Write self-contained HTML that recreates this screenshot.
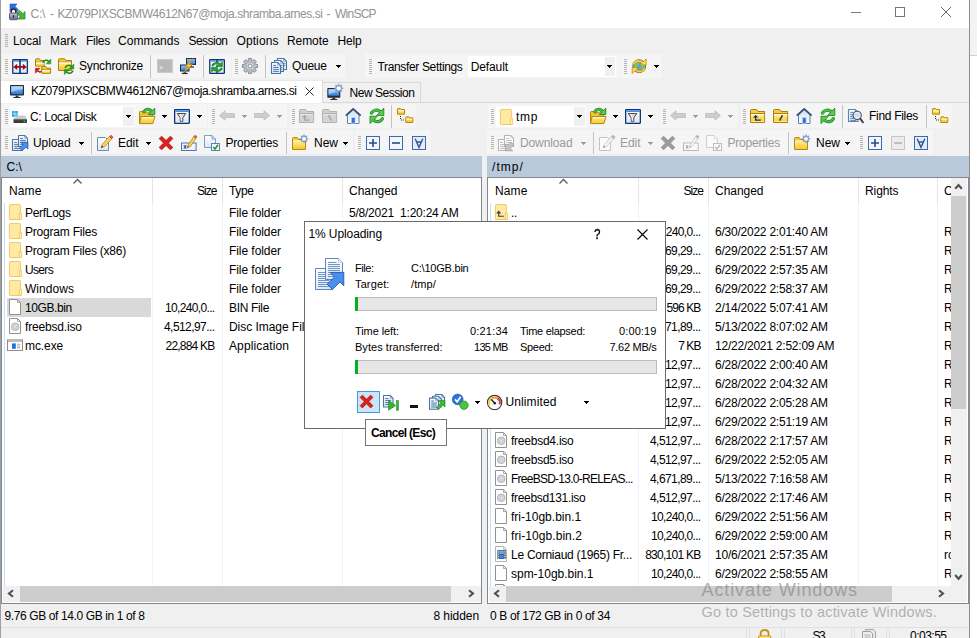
<!DOCTYPE html>
<html><head><meta charset="utf-8"><title>WinSCP</title>
<style>
*{box-sizing:border-box;margin:0;padding:0}
html,body{width:977px;height:638px;overflow:hidden}
body{background:#f0f0f0;font-family:"Liberation Sans",sans-serif;font-size:12px;color:#000;position:relative}
.a{position:absolute}
.t{position:absolute;white-space:pre;line-height:16px;height:16px}
.dis{color:#999}
.tb{position:absolute;background:#f7f7f7}
.grip{position:absolute;width:3px;background:repeating-linear-gradient(to bottom,#b4b4b4 0,#b4b4b4 1px,transparent 1px,transparent 2px)}
.sep{position:absolute;width:1px;background:#c3c3c3}
.dd{position:absolute;width:0;height:0;border-left:3px solid transparent;border-right:3px solid transparent;border-top:3px solid #000}
.dd.g{border-top-color:#9a9a9a}
.ch{position:absolute;width:1px;background:#e2e2e2}
.cl{position:absolute;width:1px;background:#eaf2fb}
svg{position:absolute;overflow:visible}
.dlg{font-size:11px}
</style></head>
<body>
<svg width="0" height="0" style="position:absolute"><defs>
<linearGradient id="gf" x1="0" y1="0" x2="0" y2="1"><stop offset="0" stop-color="#ffee8c"/><stop offset="1" stop-color="#f6c730"/></linearGradient>
<linearGradient id="gb" x1="0" y1="0" x2="0" y2="1"><stop offset="0" stop-color="#9ccbf7"/><stop offset="1" stop-color="#2d74d6"/></linearGradient>
<linearGradient id="gp" x1="0" y1="0" x2="0" y2="1"><stop offset="0" stop-color="#c9dff7"/><stop offset="1" stop-color="#ffffff"/></linearGradient>
<linearGradient id="gg" x1="0" y1="0" x2="0" y2="1"><stop offset="0" stop-color="#7ad06a"/><stop offset="1" stop-color="#1f9a25"/></linearGradient>
<linearGradient id="gl" x1="0" y1="0" x2="0" y2="1"><stop offset="0" stop-color="#c4ccd9"/><stop offset="1" stop-color="#5d6a80"/></linearGradient>
<linearGradient id="gd" x1="0" y1="0" x2="0" y2="1"><stop offset="0" stop-color="#ffffff"/><stop offset="1" stop-color="#dbe7f5"/></linearGradient>
</defs></svg>
<div class="a" style="left:0px;top:0px;width:970px;height:28px;background:#fff;"></div>
<div class="a" style="left:970px;top:0px;width:7px;height:56px;background:#f3f3f3;"></div>
<div class="a" style="left:970px;top:56px;width:7px;height:582px;background:#fff;"></div>
<div class="a" style="left:970px;top:55px;width:7px;height:1px;background:#c9d3dc;"></div>
<div class="a" style="left:969px;top:0px;width:1px;height:638px;background:#8f8f8f;"></div>
<div class="a" style="left:0px;top:0px;width:1px;height:638px;background:#a0a0a0;"></div>
<svg style="left:9px;top:4px;" width="16" height="16" viewBox="0 0 16 16"><path d="M1 0H8L6 2.3L9.5 6L6.5 9L3 5.3L1 7.5Z" fill="#2f6fe0" stroke="#1b4fb5" stroke-width=".6"/><path d="M16 7.5V15H9L11.2 12.8L7.8 9.3L10.6 6.4L14 9.8Z" fill="#48b83c" stroke="#1d7f1f" stroke-width=".7"/><path d="M2.2 9.5V7.6Q2.2 5 4.5 5Q6.8 5 6.8 7.6V9.5" fill="#fff" stroke="#2b2b2b" stroke-width="1.4"/><rect x="0.5" y="9" width="8.2" height="6.7" rx="1" fill="url(#gl)" stroke="#47536b" stroke-width=".9"/><rect x="4" y="11.2" width="1.1" height="2.6" fill="#1c2433"/></svg>
<div class="t" style="left:0;top:6px;width:400px;color:#939393"><span style="position:absolute;left:30.5px;top:0;letter-spacing:-0.278px">C:\</span> <span style="position:absolute;left:50px;top:0;letter-spacing:0.504px">-</span> <span style="position:absolute;left:57.4px;top:0;letter-spacing:-0.425px">KZ079PIXSCBMW4612N67@moja.shramba.arnes.si</span> <span style="position:absolute;left:326.6px;top:0;letter-spacing:0.404px">-</span> <span style="position:absolute;left:335px;top:0;letter-spacing:-0.757px">WinSCP</span></div>
<svg style="left:851px;top:7px" width="12" height="12"><path d="M0 5.5H10" stroke="#777" stroke-width="1" fill="none"/></svg>
<svg style="left:895px;top:7px" width="12" height="12"><rect x="0.5" y="0.5" width="9" height="9" stroke="#777" stroke-width="1" fill="none"/></svg>
<svg style="left:941px;top:7px" width="12" height="12"><path d="M0 0L10 10M10 0L0 10" stroke="#666" stroke-width="1" fill="none"/></svg>
<div class="grip" style="left:5px;top:34px;height:13px"></div>
<div class="t" style="top:33px;left:13px;letter-spacing:-0.137px;">Local</div>
<div class="t" style="top:33px;left:50px;letter-spacing:-0.041px;">Mark</div>
<div class="t" style="top:33px;left:86px;letter-spacing:-0.267px;">Files</div>
<div class="t" style="top:33px;left:118px;letter-spacing:0.019px;">Commands</div>
<div class="t" style="top:33px;left:188.5px;letter-spacing:-0.527px;">Session</div>
<div class="t" style="top:33px;left:236.5px;letter-spacing:0.092px;">Options</div>
<div class="t" style="top:33px;left:287px;letter-spacing:-0.086px;">Remote</div>
<div class="t" style="top:33px;left:337.5px;letter-spacing:-0.170px;">Help</div>
<div class="a" style="left:2px;top:54px;width:229px;height:24px;background:#f5f5f5;"></div>
<div class="a" style="left:232px;top:54px;width:113px;height:24px;background:#f5f5f5;"></div>
<div class="a" style="left:365px;top:54px;width:254px;height:24px;background:#f5f5f5;"></div>
<div class="a" style="left:620px;top:54px;width:42px;height:24px;background:#f5f5f5;"></div>
<div class="grip" style="left:5px;top:59px;height:15px"></div>
<svg style="left:12px;top:58px;" width="16" height="16" viewBox="0 0 16 16"><rect x="0.75" y="1.65" width="14.6" height="13.7" rx=".6" fill="url(#gd)" stroke="#0b3575" stroke-width="1.3"/><rect x="1.4" y="2.3" width="13.3" height="1.3" fill="#3f82e2"/><rect x="7.2" y="1.6" width="1.6" height="13.8" fill="#0b3575"/><path d="M1.3 8.9L5.2 5.8V8H10.8V5.8L14.7 8.9L10.8 12V9.8H5.2V12Z" fill="#a80a0a"/></svg>
<svg style="left:35px;top:58px;" width="16" height="16" viewBox="0 0 16 16"><path d="M0.5 8.100000000000001V1.8Q0.5 0.8 1.5 0.8H4.4L5.6000000000000005 2.5H9.1V8.100000000000001Z" fill="#f6cf3c" stroke="#b07d0c" stroke-linejoin="round"/><path d="M0.5 4.1H9.1" stroke="#b07d0c" stroke-width=".9"/><rect x="1" y="4.5" width="7.6" height="3.1000000000000005" fill="url(#gf)"/><rect x="1" y="4.5" width="7.6" height="1.2" fill="#fffdf0"/><g transform="translate(6.6 0.9) scale(.62 .66)"><path d="M2.4 5.1C4 2 8.2 0.9 11.4 3.8" fill="none" stroke="#1c8a20" stroke-width="2.3" stroke-linecap="round"/><path d="M14.8 0.2V7.5H7.5Z" fill="#2fa02c" stroke="#1c8a20" stroke-width=".9" stroke-linejoin="round"/></g><g transform="translate(9.6 15.3) rotate(180) scale(.62 .66)"><path d="M2.4 5.1C4 2 8.2 0.9 11.4 3.8" fill="none" stroke="#b81010" stroke-width="2.3" stroke-linecap="round"/><path d="M14.8 0.2V7.5H7.5Z" fill="#dc1c1c" stroke="#b81010" stroke-width=".9" stroke-linejoin="round"/></g><path d="M6.8 15.3V9.5Q6.8 8.5 7.8 8.5H10.7L11.899999999999999 10.2H15.5V15.3Z" fill="#f6cf3c" stroke="#b07d0c" stroke-linejoin="round"/><path d="M6.8 11.8H15.5" stroke="#b07d0c" stroke-width=".9"/><rect x="7.3" y="12.2" width="7.699999999999999" height="2.5999999999999996" fill="url(#gf)"/><rect x="7.3" y="12.2" width="7.699999999999999" height="1.2" fill="#fffdf0"/></svg>
<svg style="left:58px;top:58px;" width="16" height="16" viewBox="0 0 16 16"><path d="M0.5 12.5V1.8Q0.5 0.8 1.5 0.8H6.6L7.8 2.5H13.5V12.5Z" fill="#f6cf3c" stroke="#b07d0c" stroke-linejoin="round"/><path d="M0.5 4.1H13.5" stroke="#b07d0c" stroke-width=".9"/><rect x="1" y="4.5" width="12" height="7.499999999999999" fill="url(#gf)"/><rect x="1" y="4.5" width="12" height="1.2" fill="#fffdf0"/><g transform="translate(5.7 5.9) scale(.68)"><path d="M2.4 5.1C4 2 8.2 0.9 11.4 3.8" fill="none" stroke="#1c8a20" stroke-width="2.3" stroke-linecap="round"/><path d="M14.8 0.2V7.5H7.5Z" fill="#2fa02c" stroke="#1c8a20" stroke-width=".9" stroke-linejoin="round"/><g transform="rotate(180 7.9 7.9)"><path d="M2.4 5.1C4 2 8.2 0.9 11.4 3.8" fill="none" stroke="#1c8a20" stroke-width="2.3" stroke-linecap="round"/><path d="M14.8 0.2V7.5H7.5Z" fill="#2fa02c" stroke="#1c8a20" stroke-width=".9" stroke-linejoin="round"/></g></g></svg>
<div class="t" style="top:58px;left:79px;letter-spacing:-0.185px;">Synchronize</div>
<div class="sep" style="left:150px;top:55px;height:23px"></div>
<svg style="left:157px;top:58px;" width="16" height="16" viewBox="0 0 16 16"><rect x="0" y="1" width="15.6" height="14" fill="#b9b9b9"/><rect x="0.5" y="1.5" width="14.6" height="13" fill="none" stroke="#c9c9c9"/><path d="M2.5 8L5.2 9.8L2.5 11.6" stroke="#e2e2e2" stroke-width="1.1" fill="none"/></svg>
<svg style="left:180px;top:58px;" width="16" height="16" viewBox="0 0 16 16"><rect x="6.5" y="0.5" width="9" height="6" fill="url(#gb)" stroke="#1d2b45" stroke-width="1"/><rect x="10.0" y="7" width="2" height="1.6" fill="#2a2a2a"/><rect x="8.0" y="8.4" width="6" height="1.2" fill="#2a2a2a"/><rect x="0.5" y="7.0" width="8.5" height="6" fill="url(#gb)" stroke="#1d2b45" stroke-width="1"/><rect x="3.75" y="13.5" width="2" height="1.6" fill="#2a2a2a"/><rect x="1.75" y="14.9" width="6" height="1.2" fill="#2a2a2a"/><path d="M13 0.6L5.4 8.2H8.6L3.4 15L12.4 6.6H9Z" fill="#ffd84a" stroke="#e08a00" stroke-width=".8" stroke-linejoin="round"/></svg>
<div class="sep" style="left:203px;top:55px;height:23px"></div>
<svg style="left:209px;top:58px;" width="16" height="16" viewBox="0 0 16 16"><rect x="0.75" y="1.65" width="14.6" height="13.7" rx=".6" fill="url(#gd)" stroke="#0b3575" stroke-width="1.3"/><rect x="1.4" y="2.3" width="13.3" height="1.3" fill="#3f82e2"/><rect x="7.3" y="1.6" width="1.4" height="13.8" fill="#0b3575"/><rect x="7.3" y="6" width="1.4" height="1.2" fill="#c8d8ee"/><rect x="7.3" y="9" width="1.4" height="1.2" fill="#c8d8ee"/><g transform="translate(1.8 3.75) scale(.79 .66)"><path d="M2.4 5.1C4 2 8.2 0.9 11.4 3.8" fill="none" stroke="#1c8a20" stroke-width="3.2" stroke-linecap="round"/><path d="M14.8 0.2V7.5H7.5Z" fill="#2c9c2a" stroke="#1c8a20" stroke-width=".9" stroke-linejoin="round"/><path d="M2.4 5.1C4 2 8.2 0.9 11.8 4.2" fill="none" stroke="#2c9c2a" stroke-width="1.8" stroke-linecap="round"/><g transform="rotate(180 7.9 7.9)"><path d="M2.4 5.1C4 2 8.2 0.9 11.4 3.8" fill="none" stroke="#1c8a20" stroke-width="3.2" stroke-linecap="round"/><path d="M14.8 0.2V7.5H7.5Z" fill="#2c9c2a" stroke="#1c8a20" stroke-width=".9" stroke-linejoin="round"/><path d="M2.4 5.1C4 2 8.2 0.9 11.8 4.2" fill="none" stroke="#2c9c2a" stroke-width="1.8" stroke-linecap="round"/></g></g></svg>
<div class="grip" style="left:235px;top:59px;height:15px"></div>
<svg style="left:242px;top:58px;" width="16" height="16" viewBox="0 0 16 16"><path d="M6.19 2.70L6.58 0.43L9.42 0.43L9.81 2.70L10.46 2.97L12.35 1.65L14.35 3.65L13.03 5.54L13.30 6.19L15.57 6.58L15.57 9.42L13.30 9.81L13.03 10.46L14.35 12.35L12.35 14.35L10.46 13.03L9.81 13.30L9.42 15.57L6.58 15.57L6.19 13.30L5.54 13.03L3.65 14.35L1.65 12.35L2.97 10.46L2.70 9.81L0.43 9.42L0.43 6.58L2.70 6.19L2.97 5.54L1.65 3.65L3.65 1.65L5.54 2.97Z" fill="#b9bec5" stroke="#7f868f" stroke-width=".9" stroke-linejoin="round"/><circle cx="8" cy="8" r="3.9" fill="#d9dce1" stroke="#9aa0a8" stroke-width=".6"/><circle cx="8" cy="8" r="2" fill="#f5f5f5" stroke="#7f868f" stroke-width=".9"/></svg>
<div class="sep" style="left:265px;top:55px;height:23px"></div>
<svg style="left:271px;top:58px;" width="16" height="16" viewBox="0 0 16 16"><path d="M6.5 0.5H12.7L15.5 3.3V11.5H6.5Z" fill="url(#gd)" stroke="#4a74a8" stroke-width="1.1" stroke-linejoin="round"/><path d="M12.7 0.8V3.3H15.2" fill="none" stroke="#4a74a8" stroke-width=".7" opacity=".7"/><path d="M13 5.4H14.4M13 7.4H14.4" stroke="#4a74a8" stroke-width=".9"/><path d="M3.5 2.5H9.7L12.5 5.3V13.5H3.5Z" fill="url(#gd)" stroke="#4a74a8" stroke-width="1.1" stroke-linejoin="round"/><path d="M9.7 2.8V5.3H12.2" fill="none" stroke="#4a74a8" stroke-width=".7" opacity=".7"/><path d="M10 7.4H11.4M10 9.4H11.4M10 11.4H11.4" stroke="#4a74a8" stroke-width=".9"/><path d="M0.5 4.5H6.7L9.5 7.3V15.5H0.5Z" fill="url(#gd)" stroke="#4a74a8" stroke-width="1.1" stroke-linejoin="round"/><path d="M6.7 4.8V7.3H9.2" fill="none" stroke="#4a74a8" stroke-width=".7" opacity=".7"/><path d="M2.2 7.4H5" stroke="#4a74a8" stroke-width="1"/><path d="M2.2 9.4H7.8" stroke="#4a74a8" stroke-width="1"/><path d="M2.2 11.4H7.8" stroke="#4a74a8" stroke-width="1"/><path d="M2.2 13.4H7.8" stroke="#4a74a8" stroke-width="1"/></svg>
<div class="t" style="top:58px;left:292px;letter-spacing:-0.305px;">Queue</div>
<svg style="left:336px;top:65px" width="5" height="3"><path d="M0 0H5V1H4V2H3V3H2V2H1V1H0Z" fill="#000"/></svg>
<div class="grip" style="left:369px;top:59px;height:15px"></div>
<div class="t" style="top:59px;left:377.5px;letter-spacing:-0.348px;">Transfer Settings</div>
<div class="a" style="left:468px;top:56px;width:148px;height:21px;background:#fff;"></div>
<div class="a" style="left:605px;top:57px;width:10px;height:19px;background:#f0f0f0;"></div>
<div class="t" style="top:59px;left:470.7px;letter-spacing:-0.103px;">Default</div>
<svg style="left:607px;top:65px" width="5" height="3"><path d="M0 0H5V1H4V2H3V3H2V2H1V1H0Z" fill="#000"/></svg>
<div class="grip" style="left:624px;top:59px;height:15px"></div>
<svg style="left:631px;top:58px;" width="16" height="16" viewBox="0 0 16 16"><circle cx="8.2" cy="8.2" r="6.4" fill="#5aa0ee" stroke="#2b62b8" stroke-width=".8"/><path d="M3.6 5.6Q5.6 3 8 4.4Q8.6 6.4 6.6 7.4Q5.4 9 6.6 11.2Q4.2 10.6 3.4 8.6Q3 7 3.6 5.6ZM10 5.8Q12.6 5 13.6 7.2Q14 9.8 12 12Q10.2 11.4 10.6 9.2Q9.2 7.4 10 5.8Z" fill="#6fd060"/><g transform="translate(0.3 0.3)"><path d="M2.6 5.6C4 2.6 8 1.4 11 4" fill="none" stroke="#c48a08" stroke-width="2.7" stroke-linecap="round"/><path d="M14.9 0.6V6.6H8.9Z" fill="#ffdf4a" stroke="#c48a08" stroke-width=".8" stroke-linejoin="round"/><path d="M2.6 5.6C4 2.6 8 1.4 11.6 4.4" fill="none" stroke="#ffd93a" stroke-width="1.4" stroke-linecap="round"/><g transform="rotate(180 7.9 7.9)"><path d="M2.6 5.6C4 2.6 8 1.4 11 4" fill="none" stroke="#c48a08" stroke-width="2.7" stroke-linecap="round"/><path d="M14.9 0.6V6.6H8.9Z" fill="#ffdf4a" stroke="#c48a08" stroke-width=".8" stroke-linejoin="round"/><path d="M2.6 5.6C4 2.6 8 1.4 11.6 4.4" fill="none" stroke="#ffd93a" stroke-width="1.4" stroke-linecap="round"/></g></g></svg>
<svg style="left:654px;top:65px" width="5" height="3"><path d="M0 0H5V1H4V2H3V3H2V2H1V1H0Z" fill="#000"/></svg>
<div class="a" style="left:1px;top:102px;width:968px;height:1px;background:#d9d9d9;"></div>
<div class="a" style="left:1px;top:80px;width:322px;height:23px;background:#fff;border-right:1px solid #d9d9d9;border-top:1px solid #e8e8e8"></div>
<div class="a" style="left:323px;top:82px;width:98px;height:20px;background:#f0f0f0;border:1px solid #d9d9d9;border-left:none;border-bottom:none"></div>
<svg style="left:9px;top:84px;" width="16" height="16" viewBox="0 0 16 16"><rect x="1" y="1" width="14" height="10.5" rx=".8" fill="#1f2a3d"/><rect x="2.2" y="2.2" width="11.6" height="8" fill="url(#gb)"/><path d="M2.2 2.2H13.8V5Q8 5.5 2.2 8Z" fill="#b7dbfb" opacity=".75"/><rect x="6.6" y="11.5" width="2.8" height="1.6" fill="#2a2f38"/><rect x="4.2" y="12.9" width="7.6" height="1.2" rx=".4" fill="#2a2f38"/></svg>
<div class="t" style="top:83px;left:31px;letter-spacing:-0.416px;">KZ079PIXSCBMW4612N67@moja.shramba.arnes.si</div>
<svg style="left:305px;top:87px" width="9" height="9"><path d="M0.5 0.5L8.5 8.5M8.5 0.5L0.5 8.5" stroke="#1a1a1a" stroke-width=".95" fill="none"/></svg>
<svg style="left:327px;top:84px;" width="16" height="16" viewBox="0 0 16 16"><rect x="0.3" y="4" width="13" height="9.8" rx=".9" fill="#232c3c"/><rect x="1.5" y="5.2" width="10.6" height="6.6" fill="url(#gb)"/><path d="M1.5 5.2H12.1V7.6Q6 8.2 1.5 10.6Z" fill="#b7dbfb" opacity=".7"/><rect x="5.4" y="13.6" width="2.8" height="1.5" fill="#2a2f38"/><rect x="3.2" y="14.9" width="7.2" height="1.2" rx=".5" fill="#2a2f38"/><path d="M11.70 -0.30L12.69 1.90L14.95 1.05L14.10 3.31L16.30 4.30L14.10 5.29L14.95 7.55L12.69 6.70L11.70 8.90L10.71 6.70L8.45 7.55L9.30 5.29L7.10 4.30L9.30 3.31L8.45 1.05L10.71 1.90Z" fill="#7f9fca" stroke="#6d8fbf" stroke-width=".5" stroke-linejoin="round"/><circle cx="11.7" cy="4.3" r="2.1" fill="#fff"/></svg>
<div class="t" style="top:85px;left:349.5px;letter-spacing:-0.457px;">New Session</div>
<div class="a" style="left:2px;top:104px;width:205px;height:24px;background:#f5f5f5;"></div>
<div class="a" style="left:208px;top:104px;width:79px;height:24px;background:#f5f5f5;"></div>
<div class="grip" style="left:5px;top:109px;height:15px"></div>
<div class="a" style="left:10px;top:106px;width:125px;height:21px;background:#fff;"></div>
<div class="a" style="left:123px;top:107px;width:11px;height:19px;background:#f0f0f0;"></div>
<svg style="left:126px;top:115px" width="5" height="3"><path d="M0 0H5V1H4V2H3V3H2V2H1V1H0Z" fill="#000"/></svg>
<svg style="left:139px;top:108px;" width="16" height="16" viewBox="0 0 16 16"><path d="M0.5 15V4.2Q0.5 3.5 1.2 3.5H4.6L5.8 4.8H13.4V9H0.5Z" fill="#f3c632" stroke="#b9860e"/><path d="M0.5 15.6L2.2 8.5H16L13.8 15.6Z" fill="url(#gf)" stroke="#b9860e" stroke-linejoin="round"/><path d="M3 9.6H14.8" stroke="#fffbe0" stroke-width="1"/><path d="M4.9 3.8C6 1.4 9.4 0.4 12 2.8" fill="none" stroke="#1c8a20" stroke-width="3.2" stroke-linecap="round"/><path d="M15.8 0.2V6.6H9.2Z" fill="#5ccc55" stroke="#1c8a20" stroke-width=".9" stroke-linejoin="round"/><path d="M4.9 3.8C6 1.4 9.4 0.4 12.4 3.2" fill="none" stroke="#4cc046" stroke-width="1.8" stroke-linecap="round"/></svg>
<svg style="left:162px;top:115px" width="5" height="3"><path d="M0 0H5V1H4V2H3V3H2V2H1V1H0Z" fill="#000"/></svg>
<svg style="left:174px;top:109px;" width="16" height="16" viewBox="0 0 16 16"><rect x="0.65" y="0.65" width="14.7" height="13.7" rx=".5" fill="url(#gd)" stroke="#0b3575" stroke-width="1.3"/><rect x="1.3" y="1.3" width="13.4" height="1.7" fill="#4a8ae6"/><path d="M3.2 4.5H11.8L8.8 8.8V12.3Q7.5 13 6.2 12.3V8.8Z" fill="#d9d9d9" stroke="#4c4c4c" stroke-width="1" stroke-linejoin="round"/><path d="M6.4 5.6L7.2 8.6V11.6" stroke="#fafafa" stroke-width="1" fill="none"/></svg>
<svg style="left:197px;top:115px" width="5" height="3"><path d="M0 0H5V1H4V2H3V3H2V2H1V1H0Z" fill="#000"/></svg>
<div class="grip" style="left:212px;top:109px;height:15px"></div>
<svg style="left:219px;top:110px;" width="16" height="16" viewBox="0 0 16 16"><path d="M0.5 5.5L6 0.8V3.5H15.5V7.5H6V10.2Z" fill="#cdcdcd" stroke="#bdbdbd" stroke-width=".8"/></svg>
<svg style="left:242px;top:115px" width="5" height="3"><path d="M0 0H5V1H4V2H3V3H2V2H1V1H0Z" fill="#9c9c9c"/></svg>
<svg style="left:254px;top:110px;" width="16" height="16" viewBox="0 0 16 16"><path d="M15.5 5.5L10 0.8V3.5H0.5V7.5H10V10.2Z" fill="#cdcdcd" stroke="#bdbdbd" stroke-width=".8"/></svg>
<svg style="left:277px;top:115px" width="5" height="3"><path d="M0 0H5V1H4V2H3V3H2V2H1V1H0Z" fill="#9c9c9c"/></svg>
<svg style="left:12px;top:108px;" width="16" height="16" viewBox="0 0 16 16"><rect x="0" y="3" width="2.6" height="2.6" fill="#19a6f0"/><rect x="3.2" y="3" width="2.6" height="2.6" fill="#19a6f0"/><rect x="0" y="6.2" width="2.6" height="2.6" fill="#19a6f0"/><rect x="3.2" y="6.2" width="2.6" height="2.6" fill="#19a6f0"/><path d="M3.5 7.5H13L15 11.5H1.5Z" fill="#c9c9c9"/><rect x="1.5" y="11.2" width="13.5" height="3.8" rx=".8" fill="#3a3a3a"/><rect x="1.5" y="11.2" width="13.5" height="1" fill="#6a6a6a"/><rect x="11.6" y="12.8" width="1.5" height="1.3" fill="#35e04a"/></svg>
<div class="t" style="top:109px;left:30px;letter-spacing:-0.322px;">C: Local Disk</div>
<div class="a" style="left:290px;top:104px;width:126px;height:24px;background:#f5f5f5;"></div>
<div class="grip" style="left:292px;top:109px;height:15px"></div>
<svg style="left:299px;top:109px;" width="16" height="16" viewBox="0 0 16 16"><path d="M0.5 13.5V1.6Q0.5 0.5 1.6 0.5H6.6L8 2.5H14.6V13.5Z" fill="#d0d0d0" stroke="#b2b2b2" stroke-linejoin="round"/><path d="M0.5 4.5H14.6" stroke="#b2b2b2" stroke-width="1"/><rect x="1" y="5" width="13.1" height="8" fill="#d4d4d4"/><rect x="1" y="5" width="13.1" height="1.2" fill="#e6e6e6"/><path d="M5.6 7.4V11.2H10.8" stroke="#a4a4a4" stroke-width="1.3" fill="none"/><path d="M3 8.6L5.6 5.8L8.2 8.6Z" fill="#a4a4a4"/></svg>
<svg style="left:322px;top:109px;" width="16" height="16" viewBox="0 0 16 16"><path d="M0.5 13.5V1.6Q0.5 0.5 1.6 0.5H6.6L8 2.5H14.6V13.5Z" fill="#d0d0d0" stroke="#b2b2b2" stroke-linejoin="round"/><path d="M0.5 4.5H14.6" stroke="#b2b2b2" stroke-width="1"/><rect x="1" y="5" width="13.1" height="8" fill="#d4d4d4"/><rect x="1" y="5" width="13.1" height="1.2" fill="#e6e6e6"/><path d="M6.6 6.2L9.5 11.6" stroke="#a4a4a4" stroke-width="1.4" fill="none"/></svg>
<svg style="left:345px;top:108px;" width="16" height="16" viewBox="0 0 16 16"><path d="M2.5 7V15.5H14V7L8.2 1.6Z" fill="url(#gp)" stroke="#5f7fae"/><path d="M0.7 7.6L8.2 0.8L15.7 7.6" fill="none" stroke="#3c4f6e" stroke-width="1.7" stroke-linejoin="miter"/><rect x="6.3" y="9.4" width="3.8" height="5.8" fill="#2d6fdc" stroke="#c9dcf5" stroke-width=".7"/></svg>
<svg style="left:369px;top:108px;" width="16" height="16" viewBox="0 0 16 16"><path d="M2.4 5.1C4 2 8.2 0.9 11.4 3.8" fill="none" stroke="#1c8a20" stroke-width="3.2" stroke-linecap="round"/><path d="M14.8 0.2V7.5H7.5Z" fill="#5ccc55" stroke="#1c8a20" stroke-width=".9" stroke-linejoin="round"/><path d="M2.4 5.1C4 2 8.2 0.9 11.8 4.2" fill="none" stroke="#4cc046" stroke-width="1.8" stroke-linecap="round"/><g transform="rotate(180 7.9 7.9)"><path d="M2.4 5.1C4 2 8.2 0.9 11.4 3.8" fill="none" stroke="#1c8a20" stroke-width="3.2" stroke-linecap="round"/><path d="M14.8 0.2V7.5H7.5Z" fill="#5ccc55" stroke="#1c8a20" stroke-width=".9" stroke-linejoin="round"/><path d="M2.4 5.1C4 2 8.2 0.9 11.8 4.2" fill="none" stroke="#4cc046" stroke-width="1.8" stroke-linecap="round"/></g></svg>
<div class="sep" style="left:391px;top:105px;height:23px"></div>
<svg style="left:397px;top:108px;" width="16" height="16" viewBox="0 0 16 16"><path d="M0.5 1.2Q0.5 0.5 1.2 0.5H3.4L4.2 1.5H7.5V6.2H0.5Z" fill="#f7d23e" stroke="#b9860e"/><rect x="1" y="2.3" width="6" height="1.2" fill="#fff8d2"/><path d="M8.8 9.5Q8.8 8.8 9.5 8.8H11.700000000000001L12.5 9.8H15.8V14.5H8.8Z" fill="#f7d23e" stroke="#b9860e"/><rect x="9.3" y="10.600000000000001" width="6" height="1.2" fill="#fff8d2"/><path d="M3 8H4V9H3ZM3 10H4V11H3ZM4 11.5H5V12.5H4ZM6 11.5H7V12.5H6Z" fill="#222"/></svg>
<div class="a" style="left:488px;top:104px;width:170px;height:24px;background:#f5f5f5;"></div>
<div class="a" style="left:659px;top:104px;width:79px;height:24px;background:#f5f5f5;"></div>
<div class="grip" style="left:491px;top:109px;height:15px"></div>
<div class="a" style="left:496px;top:106px;width:90px;height:21px;background:#fff;"></div>
<div class="a" style="left:574px;top:107px;width:11px;height:19px;background:#f0f0f0;"></div>
<svg style="left:577px;top:115px" width="5" height="3"><path d="M0 0H5V1H4V2H3V3H2V2H1V1H0Z" fill="#000"/></svg>
<svg style="left:590px;top:108px;" width="16" height="16" viewBox="0 0 16 16"><path d="M0.5 15V4.2Q0.5 3.5 1.2 3.5H4.6L5.8 4.8H13.4V9H0.5Z" fill="#f3c632" stroke="#b9860e"/><path d="M0.5 15.6L2.2 8.5H16L13.8 15.6Z" fill="url(#gf)" stroke="#b9860e" stroke-linejoin="round"/><path d="M3 9.6H14.8" stroke="#fffbe0" stroke-width="1"/><path d="M4.9 3.8C6 1.4 9.4 0.4 12 2.8" fill="none" stroke="#1c8a20" stroke-width="3.2" stroke-linecap="round"/><path d="M15.8 0.2V6.6H9.2Z" fill="#5ccc55" stroke="#1c8a20" stroke-width=".9" stroke-linejoin="round"/><path d="M4.9 3.8C6 1.4 9.4 0.4 12.4 3.2" fill="none" stroke="#4cc046" stroke-width="1.8" stroke-linecap="round"/></svg>
<svg style="left:613px;top:115px" width="5" height="3"><path d="M0 0H5V1H4V2H3V3H2V2H1V1H0Z" fill="#000"/></svg>
<svg style="left:625px;top:109px;" width="16" height="16" viewBox="0 0 16 16"><rect x="0.65" y="0.65" width="14.7" height="13.7" rx=".5" fill="url(#gd)" stroke="#0b3575" stroke-width="1.3"/><rect x="1.3" y="1.3" width="13.4" height="1.7" fill="#4a8ae6"/><path d="M3.2 4.5H11.8L8.8 8.8V12.3Q7.5 13 6.2 12.3V8.8Z" fill="#d9d9d9" stroke="#4c4c4c" stroke-width="1" stroke-linejoin="round"/><path d="M6.4 5.6L7.2 8.6V11.6" stroke="#fafafa" stroke-width="1" fill="none"/></svg>
<svg style="left:648px;top:115px" width="5" height="3"><path d="M0 0H5V1H4V2H3V3H2V2H1V1H0Z" fill="#000"/></svg>
<div class="grip" style="left:663px;top:109px;height:15px"></div>
<svg style="left:670px;top:110px;" width="16" height="16" viewBox="0 0 16 16"><path d="M0.5 5.5L6 0.8V3.5H15.5V7.5H6V10.2Z" fill="#cdcdcd" stroke="#bdbdbd" stroke-width=".8"/></svg>
<svg style="left:693px;top:115px" width="5" height="3"><path d="M0 0H5V1H4V2H3V3H2V2H1V1H0Z" fill="#9c9c9c"/></svg>
<svg style="left:705px;top:110px;" width="16" height="16" viewBox="0 0 16 16"><path d="M15.5 5.5L10 0.8V3.5H0.5V7.5H10V10.2Z" fill="#cdcdcd" stroke="#bdbdbd" stroke-width=".8"/></svg>
<svg style="left:728px;top:115px" width="5" height="3"><path d="M0 0H5V1H4V2H3V3H2V2H1V1H0Z" fill="#9c9c9c"/></svg>
<svg style="left:497px;top:109px;" width="16" height="16" viewBox="0 0 16 16"><rect x="3.4" y="0.6" width="11" height="14.9" rx=".6" fill="#ffe9a3" stroke="#efca62" stroke-width="1"/><rect x="13.3" y="9.3" width="2.4" height="6.2" rx=".5" fill="#fff0bd" stroke="#eec65a" stroke-width=".9"/></svg>
<div class="t" style="top:109px;left:516px;letter-spacing:0.666px;">tmp</div>
<div class="a" style="left:741px;top:104px;width:211px;height:24px;background:#f5f5f5;"></div>
<div class="grip" style="left:743px;top:109px;height:15px"></div>
<svg style="left:750px;top:109px;" width="16" height="16" viewBox="0 0 16 16"><path d="M0.5 13.5V1.6Q0.5 0.5 1.6 0.5H6.6L8 2.5H14.6V13.5Z" fill="#f6cf3c" stroke="#b07d0c" stroke-linejoin="round"/><path d="M0.5 4.5H14.6" stroke="#b07d0c" stroke-width="1"/><rect x="1" y="5" width="13.1" height="8" fill="url(#gf)"/><rect x="1" y="5" width="13.1" height="1.4" fill="#fffdf0"/><rect x="1" y="11.8" width="13.1" height="1.2" fill="#ffeb8a"/><path d="M5.6 7.4V11.2H10.8" stroke="#26324a" stroke-width="1.3" fill="none"/><path d="M3 8.6L5.6 5.8L8.2 8.6Z" fill="#26324a"/></svg>
<svg style="left:773px;top:109px;" width="16" height="16" viewBox="0 0 16 16"><path d="M0.5 13.5V1.6Q0.5 0.5 1.6 0.5H6.6L8 2.5H14.6V13.5Z" fill="#f6cf3c" stroke="#b07d0c" stroke-linejoin="round"/><path d="M0.5 4.5H14.6" stroke="#b07d0c" stroke-width="1"/><rect x="1" y="5" width="13.1" height="8" fill="url(#gf)"/><rect x="1" y="5" width="13.1" height="1.4" fill="#fffdf0"/><rect x="1" y="11.8" width="13.1" height="1.2" fill="#ffeb8a"/><path d="M9.5 6.2L6.6 11.6" stroke="#26324a" stroke-width="1.4" fill="none"/></svg>
<svg style="left:796px;top:108px;" width="16" height="16" viewBox="0 0 16 16"><path d="M2.5 7V15.5H14V7L8.2 1.6Z" fill="url(#gp)" stroke="#5f7fae"/><path d="M0.7 7.6L8.2 0.8L15.7 7.6" fill="none" stroke="#3c4f6e" stroke-width="1.7" stroke-linejoin="miter"/><rect x="6.3" y="9.4" width="3.8" height="5.8" fill="#2d6fdc" stroke="#c9dcf5" stroke-width=".7"/></svg>
<svg style="left:820px;top:108px;" width="16" height="16" viewBox="0 0 16 16"><path d="M2.4 5.1C4 2 8.2 0.9 11.4 3.8" fill="none" stroke="#1c8a20" stroke-width="3.2" stroke-linecap="round"/><path d="M14.8 0.2V7.5H7.5Z" fill="#5ccc55" stroke="#1c8a20" stroke-width=".9" stroke-linejoin="round"/><path d="M2.4 5.1C4 2 8.2 0.9 11.8 4.2" fill="none" stroke="#4cc046" stroke-width="1.8" stroke-linecap="round"/><g transform="rotate(180 7.9 7.9)"><path d="M2.4 5.1C4 2 8.2 0.9 11.4 3.8" fill="none" stroke="#1c8a20" stroke-width="3.2" stroke-linecap="round"/><path d="M14.8 0.2V7.5H7.5Z" fill="#5ccc55" stroke="#1c8a20" stroke-width=".9" stroke-linejoin="round"/><path d="M2.4 5.1C4 2 8.2 0.9 11.8 4.2" fill="none" stroke="#4cc046" stroke-width="1.8" stroke-linecap="round"/></g></svg>
<div class="sep" style="left:842px;top:105px;height:23px"></div>
<svg style="left:848px;top:109px;" width="16" height="16" viewBox="0 0 16 16"><path d="M0.5 0.5H7.2L10.0 3.3V12.5H0.5Z" fill="url(#gd)" stroke="#5a82b2" stroke-width="1.1" stroke-linejoin="round"/><path d="M7.2 0.8V3.3H9.7" fill="none" stroke="#5a82b2" stroke-width=".7" opacity=".7"/><path d="M2.2 3.4H5.5" stroke="#5a82b2" stroke-width="1"/><path d="M2.2 5.4H8.3" stroke="#5a82b2" stroke-width="1"/><path d="M2.2 7.4H8.3" stroke="#5a82b2" stroke-width="1"/><path d="M2.2 9.4H8.3" stroke="#5a82b2" stroke-width="1"/><path d="M2.2 11.4H8.3" stroke="#5a82b2" stroke-width="1"/><circle cx="9.2" cy="6.4" r="4.1" fill="#eef5fd" fill-opacity=".9" stroke="#4a525e" stroke-width="1.1"/><path d="M6.8 5.2H11.6M6.4 7H12" stroke="#a9c2e2" stroke-width=".8"/><path d="M12.2 9.6L15 13.4" stroke="#3a4048" stroke-width="1.8" stroke-linecap="round"/></svg>
<div class="t" style="top:108px;left:869px;letter-spacing:-0.301px;">Find Files</div>
<div class="sep" style="left:926px;top:105px;height:23px"></div>
<svg style="left:932px;top:108px;" width="16" height="16" viewBox="0 0 16 16"><path d="M0.5 1.2Q0.5 0.5 1.2 0.5H3.4L4.2 1.5H7.5V6.2H0.5Z" fill="#f7d23e" stroke="#b9860e"/><rect x="1" y="2.3" width="6" height="1.2" fill="#fff8d2"/><path d="M8.8 9.5Q8.8 8.8 9.5 8.8H11.700000000000001L12.5 9.8H15.8V14.5H8.8Z" fill="#f7d23e" stroke="#b9860e"/><rect x="9.3" y="10.600000000000001" width="6" height="1.2" fill="#fff8d2"/><path d="M3 8H4V9H3ZM3 10H4V11H3ZM4 11.5H5V12.5H4ZM6 11.5H7V12.5H6Z" fill="#222"/></svg>
<div class="a" style="left:2px;top:130px;width:351px;height:24px;background:#f5f5f5;"></div>
<div class="a" style="left:355px;top:130px;width:76px;height:24px;background:#f5f5f5;"></div>
<div class="grip" style="left:5px;top:136px;height:13px"></div>
<svg style="left:12px;top:135px;" width="16" height="16" viewBox="0 0 16 16"><path d="M0.5 4.5H6.7L9.5 7.3V15.5H0.5Z" fill="url(#gd)" stroke="#4a74a8" stroke-width="1.1" stroke-linejoin="round"/><path d="M6.7 4.8V7.3H9.2" fill="none" stroke="#4a74a8" stroke-width=".7" opacity=".7"/><path d="M2.2 7.4H5" stroke="#4a74a8" stroke-width="1"/><path d="M2.2 9.4H7.8" stroke="#4a74a8" stroke-width="1"/><path d="M2.2 11.4H7.8" stroke="#4a74a8" stroke-width="1"/><path d="M2.2 13.4H7.8" stroke="#4a74a8" stroke-width="1"/><path d="M6.5 0.5H12.7L15.5 3.3V11.5H6.5Z" fill="url(#gd)" stroke="#4a74a8" stroke-width="1.1" stroke-linejoin="round"/><path d="M12.7 0.8V3.3H15.2" fill="none" stroke="#4a74a8" stroke-width=".7" opacity=".7"/><path d="M8.2 3.4H11" stroke="#4a74a8" stroke-width="1"/><path d="M8.2 5.4H13.8" stroke="#4a74a8" stroke-width="1"/><path d="M8.2 7.4H13.8" stroke="#4a74a8" stroke-width="1"/><path d="M8.2 9.4H13.8" stroke="#4a74a8" stroke-width="1"/><path d="M8.6 7.3H15.9V14L14 12.1L10.2 15.8L7.6 13L11.3 9.6Z" fill="#4a90ea" stroke="#1f58b0" stroke-width=".8" stroke-linejoin="round"/></svg>
<div class="t" style="top:135px;left:33px;letter-spacing:-0.087px;">Upload</div>
<svg style="left:79px;top:142px" width="5" height="3"><path d="M0 0H5V1H4V2H3V3H2V2H1V1H0Z" fill="#000"/></svg>
<div class="sep" style="left:91px;top:132px;height:22px"></div>
<svg style="left:97px;top:135px;" width="16" height="16" viewBox="0 0 16 16"><path d="M0.5 2.5H8.5L11.5 5.5V15.5H0.5Z" fill="url(#gd)" stroke="#6c8bb5"/><path d="M4.2 12.8L5.2 9.4L12.4 1.6L14.8 3.8L7.6 11.6Z" fill="#f9d458" stroke="#a8741a" stroke-width=".7" stroke-linejoin="round"/><path d="M12.4 1.6L13.4 0.5Q14 0 14.6 0.5L15.8 1.6Q16.2 2.2 15.7 2.8L14.8 3.8Z" fill="#e2524a" stroke="#b03a34" stroke-width=".4"/><path d="M4.2 12.8L4.9 10.6L6.4 12Z" fill="#3a2a1a"/></svg>
<div class="t" style="top:135px;left:118px;letter-spacing:-0.044px;">Edit</div>
<svg style="left:146px;top:142px" width="5" height="3"><path d="M0 0H5V1H4V2H3V3H2V2H1V1H0Z" fill="#000"/></svg>
<svg style="left:158px;top:135px;" width="16" height="16" viewBox="0 0 16 16"><path d="M1.2 3.6L3.6 1.2L8 5.6L12.4 1.2L14.8 3.6L10.4 8L14.8 12.4L12.4 14.8L8 10.4L3.6 14.8L1.2 12.4L5.6 8Z" fill="#e0201c" stroke="#a80f0c" stroke-width=".8" stroke-linejoin="round"/></svg>
<svg style="left:181px;top:135px;" width="16" height="16" viewBox="0 0 16 16"><rect x="0.5" y="8" width="14.6" height="7.5" fill="#eef4fc" stroke="#4f74b3"/><path d="M2.8 10.2L5.4 13.6M5.4 10.2L2.8 13.6" stroke="#3d5f9e" stroke-width="1.1"/><path d="M6.4 12.8L7.2 9.8L12.8 1.6L15 3.2L9.4 11.4Z" fill="#f9d458" stroke="#a8741a" stroke-width=".7" stroke-linejoin="round"/><path d="M12.8 1.6L13.6 0.5Q14.1 0 14.7 0.4L15.6 1Q16 1.5 15.6 2.2L15 3.2Z" fill="#e2524a" stroke="#b03a34" stroke-width=".4"/><path d="M6.4 12.8L6.9 11L8 11.9Z" fill="#3a2a1a"/></svg>
<svg style="left:204px;top:135px;" width="16" height="16" viewBox="0 0 16 16"><path d="M0.5 0.5H8L11.5 4V12.5H0.5Z" fill="url(#gd)" stroke="#7d9cc6"/><path d="M8 0.5V4H11.5" fill="none" stroke="#7d9cc6"/><rect x="7.5" y="8.5" width="8" height="7" fill="#f4f8fd" stroke="#5c82bd"/><path d="M9.2 12L11 14L14 9.8" stroke="#1f9a2a" stroke-width="1.6" fill="none"/></svg>
<div class="t" style="top:135px;left:225.5px;letter-spacing:-0.219px;">Properties</div>
<div class="sep" style="left:286px;top:132px;height:22px"></div>
<svg style="left:292px;top:135px;" width="16" height="16" viewBox="0 0 16 16"><path d="M0.5 3.5Q0.5 2.5 1.5 2.5H5.2L6.6 4.5H13.5V14.5H0.5Z" fill="#f3c93a" stroke="#b9860e"/><rect x="1" y="6.4" width="12" height="7.6" fill="url(#gf)"/><rect x="1" y="5.4" width="12" height="1.2" fill="#fffbe0"/><path d="M12.00 -0.50L12.92 1.58L15.04 0.76L14.22 2.88L16.30 3.80L14.22 4.72L15.04 6.84L12.92 6.02L12.00 8.10L11.08 6.02L8.96 6.84L9.78 4.72L7.70 3.80L9.78 2.88L8.96 0.76L11.08 1.58Z" fill="#7f9fca" stroke="#6d8fbf" stroke-width=".5" stroke-linejoin="round"/><circle cx="12" cy="3.8" r="1.9" fill="#fff"/></svg>
<div class="t" style="top:135px;left:314px;letter-spacing:-0.002px;">New</div>
<svg style="left:343px;top:142px" width="5" height="3"><path d="M0 0H5V1H4V2H3V3H2V2H1V1H0Z" fill="#000"/></svg>
<div class="grip" style="left:358px;top:136px;height:13px"></div>
<svg style="left:366px;top:136px;" width="16" height="16" viewBox="0 0 16 16"><rect x="0.5" y="0.5" width="13" height="13" fill="#f3f7fd" stroke="#4169aa"/><path d="M3 7H11M7 3V11" stroke="#274b8c" stroke-width="1.6"/></svg>
<svg style="left:389px;top:136px;" width="16" height="16" viewBox="0 0 16 16"><rect x="0.5" y="0.5" width="13" height="13" fill="#f3f7fd" stroke="#4169aa"/><path d="M3 7H11" stroke="#274b8c" stroke-width="1.6"/></svg>
<svg style="left:412px;top:136px;" width="16" height="16" viewBox="0 0 16 16"><rect x="0.5" y="0.5" width="13" height="13" fill="#e3ecfa" stroke="#4169aa"/><path d="M3.2 2.8L7 11.4L10.8 2.8M4.6 6H9.4" stroke="#35588f" stroke-width="1.4" fill="none"/></svg>
<div class="a" style="left:487px;top:130px;width:368px;height:24px;background:#f5f5f5;"></div>
<div class="a" style="left:857px;top:130px;width:76px;height:24px;background:#f5f5f5;"></div>
<div class="a" style="left:487px;top:130px;width:351px;height:24px;background:#f5f5f5;"></div>
<div class="a" style="left:840px;top:130px;width:76px;height:24px;background:#f5f5f5;"></div>
<div class="grip" style="left:491px;top:136px;height:13px"></div>
<svg style="left:498px;top:135px;filter:grayscale(1) brightness(1.15) opacity(.55);" width="16" height="16" viewBox="0 0 16 16"><path d="M0.5 4.5H6.7L9.5 7.3V15.5H0.5Z" fill="url(#gd)" stroke="#4a74a8" stroke-width="1.1" stroke-linejoin="round"/><path d="M6.7 4.8V7.3H9.2" fill="none" stroke="#4a74a8" stroke-width=".7" opacity=".7"/><path d="M2.2 7.4H5" stroke="#4a74a8" stroke-width="1"/><path d="M2.2 9.4H7.8" stroke="#4a74a8" stroke-width="1"/><path d="M2.2 11.4H7.8" stroke="#4a74a8" stroke-width="1"/><path d="M2.2 13.4H7.8" stroke="#4a74a8" stroke-width="1"/><path d="M6.5 0.5H12.7L15.5 3.3V11.5H6.5Z" fill="url(#gd)" stroke="#4a74a8" stroke-width="1.1" stroke-linejoin="round"/><path d="M12.7 0.8V3.3H15.2" fill="none" stroke="#4a74a8" stroke-width=".7" opacity=".7"/><path d="M8.2 3.4H11" stroke="#4a74a8" stroke-width="1"/><path d="M8.2 5.4H13.8" stroke="#4a74a8" stroke-width="1"/><path d="M8.2 7.4H13.8" stroke="#4a74a8" stroke-width="1"/><path d="M8.2 9.4H13.8" stroke="#4a74a8" stroke-width="1"/><path d="M7.4 15.8V8.8L9.4 10.8L13 7.2L15.8 9.8L12 13.4L14.6 15.8Z" fill="#4a90ea" stroke="#1f58b0" stroke-width=".8" stroke-linejoin="round"/></svg>
<div class="t dis" style="top:135px;left:520px;letter-spacing:-0.108px;">Download</div>
<svg style="left:581px;top:142px" width="5" height="3"><path d="M0 0H5V1H4V2H3V3H2V2H1V1H0Z" fill="#9c9c9c"/></svg>
<div class="sep" style="left:593px;top:132px;height:22px"></div>
<svg style="left:599px;top:135px;filter:grayscale(1) brightness(1.15) opacity(.55);" width="16" height="16" viewBox="0 0 16 16"><path d="M0.5 2.5H8.5L11.5 5.5V15.5H0.5Z" fill="url(#gd)" stroke="#6c8bb5"/><path d="M4.2 12.8L5.2 9.4L12.4 1.6L14.8 3.8L7.6 11.6Z" fill="#f9d458" stroke="#a8741a" stroke-width=".7" stroke-linejoin="round"/><path d="M12.4 1.6L13.4 0.5Q14 0 14.6 0.5L15.8 1.6Q16.2 2.2 15.7 2.8L14.8 3.8Z" fill="#e2524a" stroke="#b03a34" stroke-width=".4"/><path d="M4.2 12.8L4.9 10.6L6.4 12Z" fill="#3a2a1a"/></svg>
<div class="t dis" style="top:135px;left:620px;letter-spacing:-0.044px;">Edit</div>
<svg style="left:648px;top:142px" width="5" height="3"><path d="M0 0H5V1H4V2H3V3H2V2H1V1H0Z" fill="#9c9c9c"/></svg>
<svg style="left:660px;top:135px;filter:grayscale(1) brightness(1.15) opacity(.55);" width="16" height="16" viewBox="0 0 16 16"><path d="M1.2 3.6L3.6 1.2L8 5.6L12.4 1.2L14.8 3.6L10.4 8L14.8 12.4L12.4 14.8L8 10.4L3.6 14.8L1.2 12.4L5.6 8Z" fill="#e0201c" stroke="#a80f0c" stroke-width=".8" stroke-linejoin="round"/></svg>
<svg style="left:683px;top:135px;filter:grayscale(1) brightness(1.15) opacity(.55);" width="16" height="16" viewBox="0 0 16 16"><rect x="0.5" y="8" width="14.6" height="7.5" fill="#eef4fc" stroke="#4f74b3"/><path d="M2.8 10.2L5.4 13.6M5.4 10.2L2.8 13.6" stroke="#3d5f9e" stroke-width="1.1"/><path d="M6.4 12.8L7.2 9.8L12.8 1.6L15 3.2L9.4 11.4Z" fill="#f9d458" stroke="#a8741a" stroke-width=".7" stroke-linejoin="round"/><path d="M12.8 1.6L13.6 0.5Q14.1 0 14.7 0.4L15.6 1Q16 1.5 15.6 2.2L15 3.2Z" fill="#e2524a" stroke="#b03a34" stroke-width=".4"/><path d="M6.4 12.8L6.9 11L8 11.9Z" fill="#3a2a1a"/></svg>
<svg style="left:706px;top:135px;filter:grayscale(1) brightness(1.15) opacity(.55);" width="16" height="16" viewBox="0 0 16 16"><path d="M0.5 0.5H8L11.5 4V12.5H0.5Z" fill="url(#gd)" stroke="#7d9cc6"/><path d="M8 0.5V4H11.5" fill="none" stroke="#7d9cc6"/><rect x="7.5" y="8.5" width="8" height="7" fill="#f4f8fd" stroke="#5c82bd"/><path d="M9.2 12L11 14L14 9.8" stroke="#1f9a2a" stroke-width="1.6" fill="none"/></svg>
<div class="t dis" style="top:135px;left:727.5px;letter-spacing:-0.219px;">Properties</div>
<div class="sep" style="left:788px;top:132px;height:22px"></div>
<svg style="left:794px;top:135px;" width="16" height="16" viewBox="0 0 16 16"><path d="M0.5 3.5Q0.5 2.5 1.5 2.5H5.2L6.6 4.5H13.5V14.5H0.5Z" fill="#f3c93a" stroke="#b9860e"/><rect x="1" y="6.4" width="12" height="7.6" fill="url(#gf)"/><rect x="1" y="5.4" width="12" height="1.2" fill="#fffbe0"/><path d="M12.00 -0.50L12.92 1.58L15.04 0.76L14.22 2.88L16.30 3.80L14.22 4.72L15.04 6.84L12.92 6.02L12.00 8.10L11.08 6.02L8.96 6.84L9.78 4.72L7.70 3.80L9.78 2.88L8.96 0.76L11.08 1.58Z" fill="#7f9fca" stroke="#6d8fbf" stroke-width=".5" stroke-linejoin="round"/><circle cx="12" cy="3.8" r="1.9" fill="#fff"/></svg>
<div class="t" style="top:135px;left:816px;letter-spacing:-0.002px;">New</div>
<svg style="left:845px;top:142px" width="5" height="3"><path d="M0 0H5V1H4V2H3V3H2V2H1V1H0Z" fill="#000"/></svg>
<div class="grip" style="left:860px;top:136px;height:13px"></div>
<svg style="left:868px;top:136px;" width="16" height="16" viewBox="0 0 16 16"><rect x="0.5" y="0.5" width="13" height="13" fill="#f3f7fd" stroke="#4169aa"/><path d="M3 7H11M7 3V11" stroke="#274b8c" stroke-width="1.6"/></svg>
<svg style="left:891px;top:136px;" width="16" height="16" viewBox="0 0 16 16"><rect x="0.5" y="0.5" width="13" height="13" fill="#ececec" stroke="#c6c6c6"/><path d="M3 7H11" stroke="#c0c0c0" stroke-width="2"/></svg>
<svg style="left:914px;top:136px;" width="16" height="16" viewBox="0 0 16 16"><rect x="0.5" y="0.5" width="13" height="13" fill="#e3ecfa" stroke="#4169aa"/><path d="M3.2 2.8L7 11.4L10.8 2.8M4.6 6H9.4" stroke="#35588f" stroke-width="1.4" fill="none"/></svg>
<div class="a" style="left:1px;top:156px;width:481px;height:21px;background:#b9c8da;"></div>
<div class="a" style="left:487px;top:156px;width:482px;height:21px;background:#b9c8da;"></div>
<div class="t" style="top:159px;left:6.5px;letter-spacing:0.055px;">C:\</div>
<div class="t" style="top:159px;left:492px;letter-spacing:1.066px;">/tmp/</div>
<div class="a" style="left:1px;top:177px;width:481px;height:427px;background:#fff;border:1px solid #828790"></div>
<div class="a" style="left:487px;top:177px;width:482px;height:427px;background:#fff;border:1px solid #828790"></div>
<div class="a" style="left:4px;top:203px;width:1px;height:383px;background:#c6def7;"></div>
<div class="a" style="left:490px;top:203px;width:1px;height:383px;background:#c6def7;"></div>
<div class="a" style="left:152px;top:178px;width:1px;height:25px;background:#e5e5e5;"></div>
<div class="a" style="left:152px;top:203px;width:1px;height:382px;background:#ebf3fc;"></div>
<div class="a" style="left:222px;top:178px;width:1px;height:25px;background:#e5e5e5;"></div>
<div class="a" style="left:222px;top:203px;width:1px;height:382px;background:#ebf3fc;"></div>
<div class="a" style="left:342px;top:178px;width:1px;height:25px;background:#e5e5e5;"></div>
<div class="a" style="left:342px;top:203px;width:1px;height:382px;background:#ebf3fc;"></div>
<div class="t" style="top:183px;left:9px;letter-spacing:0.123px;">Name</div>
<div class="t" style="top:183px;left:197px;letter-spacing:-0.961px;">Size</div>
<div class="t" style="top:183px;left:229px;letter-spacing:-0.378px;">Type</div>
<div class="t" style="top:183px;left:349px;letter-spacing:-0.029px;">Changed</div>
<svg style="left:73px;top:179px" width="9" height="5"><path d="M0.5 4.5L4.5 0.5L8.5 4.5" stroke="#5c5c5c" stroke-width="1.3" fill="none"/></svg>
<svg style="left:6px;top:204px;" width="16" height="16" viewBox="0 0 16 16"><rect x="3.4" y="0.6" width="11" height="14.9" rx=".6" fill="#ffe9a3" stroke="#efca62" stroke-width="1"/><rect x="13.3" y="9.3" width="2.4" height="6.2" rx=".5" fill="#fff0bd" stroke="#eec65a" stroke-width=".9"/></svg>
<div class="t" style="top:205px;left:25px;letter-spacing:-0.291px;">PerfLogs</div>
<div class="t" style="top:205px;left:229px;letter-spacing:-0.062px;">File folder</div>
<div class="t" style="top:205px;left:349px;letter-spacing:-0.229px;">5/8/2021  1:20:24 AM</div>
<svg style="left:6px;top:223px;" width="16" height="16" viewBox="0 0 16 16"><rect x="3.4" y="0.6" width="11" height="14.9" rx=".6" fill="#ffe9a3" stroke="#efca62" stroke-width="1"/><rect x="13.3" y="9.3" width="2.4" height="6.2" rx=".5" fill="#fff0bd" stroke="#eec65a" stroke-width=".9"/></svg>
<div class="t" style="top:224px;left:25px;letter-spacing:-0.206px;">Program Files</div>
<div class="t" style="top:224px;left:229px;letter-spacing:-0.062px;">File folder</div>
<svg style="left:6px;top:242px;" width="16" height="16" viewBox="0 0 16 16"><rect x="3.4" y="0.6" width="11" height="14.9" rx=".6" fill="#ffe9a3" stroke="#efca62" stroke-width="1"/><rect x="13.3" y="9.3" width="2.4" height="6.2" rx=".5" fill="#fff0bd" stroke="#eec65a" stroke-width=".9"/></svg>
<div class="t" style="top:243px;left:25px;letter-spacing:-0.229px;">Program Files (x86)</div>
<div class="t" style="top:243px;left:229px;letter-spacing:-0.062px;">File folder</div>
<svg style="left:6px;top:261px;" width="16" height="16" viewBox="0 0 16 16"><rect x="3.4" y="0.6" width="11" height="14.9" rx=".6" fill="#ffe9a3" stroke="#efca62" stroke-width="1"/><rect x="13.3" y="9.3" width="2.4" height="6.2" rx=".5" fill="#fff0bd" stroke="#eec65a" stroke-width=".9"/></svg>
<div class="t" style="top:262px;left:25px;letter-spacing:-0.667px;">Users</div>
<div class="t" style="top:262px;left:229px;letter-spacing:-0.062px;">File folder</div>
<svg style="left:6px;top:280px;" width="16" height="16" viewBox="0 0 16 16"><rect x="3.4" y="0.6" width="11" height="14.9" rx=".6" fill="#ffe9a3" stroke="#efca62" stroke-width="1"/><rect x="13.3" y="9.3" width="2.4" height="6.2" rx=".5" fill="#fff0bd" stroke="#eec65a" stroke-width=".9"/></svg>
<div class="t" style="top:281px;left:25px;letter-spacing:0.046px;">Windows</div>
<div class="t" style="top:281px;left:229px;letter-spacing:-0.062px;">File folder</div>
<div class="a" style="left:7px;top:298px;width:144px;height:19px;background:#d9d9d9;"></div>
<svg style="left:6px;top:299px;" width="16" height="16" viewBox="0 0 16 16"><path d="M3.5 0.5H11.5L14.5 3.5V15.5H3.5Z" fill="#fff" stroke="#919191" stroke-linejoin="round"/><path d="M11.5 0.8V3.5H14.2" fill="none" stroke="#919191" stroke-width=".8"/></svg>
<div class="t" style="top:300px;left:25px;letter-spacing:-0.416px;">10GB.bin</div>
<div class="t" style="top:300px;left:165px;letter-spacing:-0.655px;">10,240,0...</div>
<div class="t" style="top:300px;left:229px;letter-spacing:-0.334px;">BIN File</div>
<svg style="left:6px;top:318px;" width="16" height="16" viewBox="0 0 16 16"><path d="M3.5 0.5H11.5L14.5 3.5V15.5H3.5Z" fill="#fff" stroke="#919191" stroke-linejoin="round"/><path d="M11.5 0.8V3.5H14.2" fill="none" stroke="#919191" stroke-width=".8"/><circle cx="9.2" cy="8.8" r="3.8" fill="#d6d6d6" stroke="#a6a6a6" stroke-width=".8"/><circle cx="9.2" cy="8.8" r="1.2" fill="#f6f6f6" stroke="#b0b0b0" stroke-width=".5"/></svg>
<div class="t" style="top:319px;left:25px;letter-spacing:-0.181px;">freebsd.iso</div>
<div class="t" style="top:319px;left:164px;letter-spacing:-0.564px;">4,512,97...</div>
<div class="t" style="top:319px;left:229px;letter-spacing:-0.046px;">Disc Image File</div>
<svg style="left:6px;top:337px;" width="16" height="16" viewBox="0 0 16 16"><rect x="1.5" y="2.9" width="15" height="10.6" fill="#fff" stroke="#8c8c8c"/><rect x="2" y="3.4" width="14" height="1.4" fill="#b0b0b0"/><rect x="6" y="6.4" width="3.8" height="5.4" fill="#1b72e0"/><path d="M11 7.3H14.4M11 9.1H14.4M11 10.9H14.4" stroke="#a0a0a0" stroke-width=".9"/></svg>
<div class="t" style="top:338px;left:25px;letter-spacing:-0.079px;">mc.exe</div>
<div class="t" style="top:338px;left:165.5px;letter-spacing:-0.782px;">22,884 KB</div>
<div class="t" style="top:338px;left:229px;letter-spacing:0.118px;">Application</div>
<div class="a" style="left:3px;top:586px;width:478px;height:16px;background:#f0f0f0;"></div>
<div class="a" style="left:20px;top:586px;width:431px;height:16px;background:#cdcdcd;"></div>
<svg style="left:7px;top:589px" width="8" height="9"><path d="M6 1.3L2 4.5L6 7.7" stroke="#505050" stroke-width="2.1" fill="none"/></svg>
<svg style="left:467px;top:589px" width="8" height="9"><path d="M2 1.3L6 4.5L2 7.7" stroke="#505050" stroke-width="2.1" fill="none"/></svg>
<div class="a" style="left:638px;top:178px;width:1px;height:25px;background:#e5e5e5;"></div>
<div class="a" style="left:638px;top:203px;width:1px;height:382px;background:#ebf3fc;"></div>
<div class="a" style="left:708px;top:178px;width:1px;height:25px;background:#e5e5e5;"></div>
<div class="a" style="left:708px;top:203px;width:1px;height:382px;background:#ebf3fc;"></div>
<div class="a" style="left:858px;top:178px;width:1px;height:25px;background:#e5e5e5;"></div>
<div class="a" style="left:858px;top:203px;width:1px;height:382px;background:#ebf3fc;"></div>
<div class="a" style="left:937px;top:178px;width:1px;height:25px;background:#e5e5e5;"></div>
<div class="a" style="left:937px;top:203px;width:1px;height:382px;background:#ebf3fc;"></div>
<div class="t" style="top:183px;left:495px;letter-spacing:0.123px;">Name</div>
<div class="t" style="top:183px;left:683.5px;letter-spacing:-0.961px;">Size</div>
<div class="t" style="top:183px;left:715px;letter-spacing:-0.029px;">Changed</div>
<div class="t" style="top:183px;left:865px;letter-spacing:-0.085px;">Rights</div>
<div class="t" style="top:183px;left:944px;width:7px;overflow:hidden">C</div>
<svg style="left:559px;top:179px" width="9" height="5"><path d="M0.5 4.5L4.5 0.5L8.5 4.5" stroke="#5c5c5c" stroke-width="1.3" fill="none"/></svg>
<svg style="left:492px;top:204px;" width="16" height="16" viewBox="0 0 16 16"><rect x="3.4" y="0.6" width="11" height="14.9" rx=".6" fill="#ffe9a3" stroke="#efca62" stroke-width="1"/><rect x="13.3" y="9.3" width="2.4" height="6.2" rx=".5" fill="#fff0bd" stroke="#eec65a" stroke-width=".9"/><path d="M6.7 8V12.3H11.8" stroke="#3a3f47" stroke-width="1.1" fill="none"/><path d="M4.2 9.4L6.7 6.6L9.2 9.4Z" fill="#3a3f47"/></svg>
<div class="t" style="top:205px;left:511px;letter-spacing:-0.334px;">..</div>
<svg style="left:492px;top:223px;" width="16" height="16" viewBox="0 0 16 16"><path d="M3.5 0.5H11.5L14.5 3.5V15.5H3.5Z" fill="#fff" stroke="#919191" stroke-linejoin="round"/><path d="M11.5 0.8V3.5H14.2" fill="none" stroke="#919191" stroke-width=".8"/></svg>
<div class="t" style="top:224px;left:651px;letter-spacing:-0.655px;">10,240,0...</div>
<div class="t" style="top:224px;left:715px;letter-spacing:-0.230px;">6/30/2022 2:01:40 AM</div>
<div class="t" style="top:224px;left:944px;width:7px;overflow:hidden">R</div>
<svg style="left:492px;top:242px;" width="16" height="16" viewBox="0 0 16 16"><path d="M3.5 0.5H11.5L14.5 3.5V15.5H3.5Z" fill="#fff" stroke="#919191" stroke-linejoin="round"/><path d="M11.5 0.8V3.5H14.2" fill="none" stroke="#919191" stroke-width=".8"/></svg>
<div class="t" style="top:243px;left:650px;letter-spacing:-0.564px;">4,569,29...</div>
<div class="t" style="top:243px;left:715px;letter-spacing:-0.230px;">6/29/2022 2:51:57 AM</div>
<div class="t" style="top:243px;left:944px;width:7px;overflow:hidden">R</div>
<svg style="left:492px;top:261px;" width="16" height="16" viewBox="0 0 16 16"><path d="M3.5 0.5H11.5L14.5 3.5V15.5H3.5Z" fill="#fff" stroke="#919191" stroke-linejoin="round"/><path d="M11.5 0.8V3.5H14.2" fill="none" stroke="#919191" stroke-width=".8"/></svg>
<div class="t" style="top:262px;left:650px;letter-spacing:-0.564px;">4,569,29...</div>
<div class="t" style="top:262px;left:715px;letter-spacing:-0.230px;">6/29/2022 2:57:35 AM</div>
<div class="t" style="top:262px;left:944px;width:7px;overflow:hidden">R</div>
<svg style="left:492px;top:280px;" width="16" height="16" viewBox="0 0 16 16"><path d="M3.5 0.5H11.5L14.5 3.5V15.5H3.5Z" fill="#fff" stroke="#919191" stroke-linejoin="round"/><path d="M11.5 0.8V3.5H14.2" fill="none" stroke="#919191" stroke-width=".8"/></svg>
<div class="t" style="top:281px;left:650px;letter-spacing:-0.564px;">4,569,29...</div>
<div class="t" style="top:281px;left:715px;letter-spacing:-0.230px;">6/29/2022 2:58:37 AM</div>
<div class="t" style="top:281px;left:944px;width:7px;overflow:hidden">R</div>
<svg style="left:492px;top:299px;" width="16" height="16" viewBox="0 0 16 16"><path d="M3.5 0.5H11.5L14.5 3.5V15.5H3.5Z" fill="#fff" stroke="#919191" stroke-linejoin="round"/><path d="M11.5 0.8V3.5H14.2" fill="none" stroke="#919191" stroke-width=".8"/></svg>
<div class="t" style="top:300px;left:666.4px;letter-spacing:-0.877px;">596 KB</div>
<div class="t" style="top:300px;left:715px;letter-spacing:-0.230px;">2/14/2022 5:07:41 AM</div>
<div class="t" style="top:300px;left:944px;width:7px;overflow:hidden">R</div>
<svg style="left:492px;top:318px;" width="16" height="16" viewBox="0 0 16 16"><path d="M3.5 0.5H11.5L14.5 3.5V15.5H3.5Z" fill="#fff" stroke="#919191" stroke-linejoin="round"/><path d="M11.5 0.8V3.5H14.2" fill="none" stroke="#919191" stroke-width=".8"/></svg>
<div class="t" style="top:319px;left:650px;letter-spacing:-0.564px;">4,671,89...</div>
<div class="t" style="top:319px;left:715px;letter-spacing:-0.230px;">5/13/2022 8:07:02 AM</div>
<div class="t" style="top:319px;left:944px;width:7px;overflow:hidden">R</div>
<svg style="left:492px;top:337px;" width="16" height="16" viewBox="0 0 16 16"><path d="M3.5 0.5H11.5L14.5 3.5V15.5H3.5Z" fill="#fff" stroke="#919191" stroke-linejoin="round"/><path d="M11.5 0.8V3.5H14.2" fill="none" stroke="#919191" stroke-width=".8"/></svg>
<div class="t" style="top:338px;left:678.2px;letter-spacing:-0.929px;">7 KB</div>
<div class="t" style="top:338px;left:715px;letter-spacing:-0.230px;">12/22/2021 2:52:09 AM</div>
<div class="t" style="top:338px;left:944px;width:7px;overflow:hidden">R</div>
<svg style="left:492px;top:356px;" width="16" height="16" viewBox="0 0 16 16"><path d="M3.5 0.5H11.5L14.5 3.5V15.5H3.5Z" fill="#fff" stroke="#919191" stroke-linejoin="round"/><path d="M11.5 0.8V3.5H14.2" fill="none" stroke="#919191" stroke-width=".8"/></svg>
<div class="t" style="top:357px;left:650px;letter-spacing:-0.564px;">4,512,97...</div>
<div class="t" style="top:357px;left:715px;letter-spacing:-0.230px;">6/28/2022 2:00:40 AM</div>
<div class="t" style="top:357px;left:944px;width:7px;overflow:hidden">R</div>
<svg style="left:492px;top:375px;" width="16" height="16" viewBox="0 0 16 16"><path d="M3.5 0.5H11.5L14.5 3.5V15.5H3.5Z" fill="#fff" stroke="#919191" stroke-linejoin="round"/><path d="M11.5 0.8V3.5H14.2" fill="none" stroke="#919191" stroke-width=".8"/></svg>
<div class="t" style="top:376px;left:650px;letter-spacing:-0.564px;">4,512,97...</div>
<div class="t" style="top:376px;left:715px;letter-spacing:-0.230px;">6/28/2022 2:04:32 AM</div>
<div class="t" style="top:376px;left:944px;width:7px;overflow:hidden">R</div>
<svg style="left:492px;top:394px;" width="16" height="16" viewBox="0 0 16 16"><path d="M3.5 0.5H11.5L14.5 3.5V15.5H3.5Z" fill="#fff" stroke="#919191" stroke-linejoin="round"/><path d="M11.5 0.8V3.5H14.2" fill="none" stroke="#919191" stroke-width=".8"/></svg>
<div class="t" style="top:395px;left:650px;letter-spacing:-0.564px;">4,512,97...</div>
<div class="t" style="top:395px;left:715px;letter-spacing:-0.230px;">6/28/2022 2:05:28 AM</div>
<div class="t" style="top:395px;left:944px;width:7px;overflow:hidden">R</div>
<svg style="left:492px;top:413px;" width="16" height="16" viewBox="0 0 16 16"><path d="M3.5 0.5H11.5L14.5 3.5V15.5H3.5Z" fill="#fff" stroke="#919191" stroke-linejoin="round"/><path d="M11.5 0.8V3.5H14.2" fill="none" stroke="#919191" stroke-width=".8"/></svg>
<div class="t" style="top:414px;left:650px;letter-spacing:-0.564px;">4,512,97...</div>
<div class="t" style="top:414px;left:715px;letter-spacing:-0.230px;">6/29/2022 2:51:19 AM</div>
<div class="t" style="top:414px;left:944px;width:7px;overflow:hidden">R</div>
<svg style="left:492px;top:432px;" width="16" height="16" viewBox="0 0 16 16"><path d="M3.5 0.5H11.5L14.5 3.5V15.5H3.5Z" fill="#fff" stroke="#919191" stroke-linejoin="round"/><path d="M11.5 0.8V3.5H14.2" fill="none" stroke="#919191" stroke-width=".8"/><circle cx="9.2" cy="8.8" r="3.8" fill="#d6d6d6" stroke="#a6a6a6" stroke-width=".8"/><circle cx="9.2" cy="8.8" r="1.2" fill="#f6f6f6" stroke="#b0b0b0" stroke-width=".5"/></svg>
<div class="t" style="top:433px;left:511px;letter-spacing:-0.239px;">freebsd4.iso</div>
<div class="t" style="top:433px;left:650px;letter-spacing:-0.564px;">4,512,97...</div>
<div class="t" style="top:433px;left:715px;letter-spacing:-0.230px;">6/28/2022 2:17:57 AM</div>
<div class="t" style="top:433px;left:944px;width:7px;overflow:hidden">R</div>
<svg style="left:492px;top:451px;" width="16" height="16" viewBox="0 0 16 16"><path d="M3.5 0.5H11.5L14.5 3.5V15.5H3.5Z" fill="#fff" stroke="#919191" stroke-linejoin="round"/><path d="M11.5 0.8V3.5H14.2" fill="none" stroke="#919191" stroke-width=".8"/><circle cx="9.2" cy="8.8" r="3.8" fill="#d6d6d6" stroke="#a6a6a6" stroke-width=".8"/><circle cx="9.2" cy="8.8" r="1.2" fill="#f6f6f6" stroke="#b0b0b0" stroke-width=".5"/></svg>
<div class="t" style="top:452px;left:511px;letter-spacing:-0.239px;">freebsd5.iso</div>
<div class="t" style="top:452px;left:650px;letter-spacing:-0.564px;">4,512,97...</div>
<div class="t" style="top:452px;left:715px;letter-spacing:-0.230px;">6/29/2022 2:52:05 AM</div>
<div class="t" style="top:452px;left:944px;width:7px;overflow:hidden">R</div>
<svg style="left:492px;top:470px;" width="16" height="16" viewBox="0 0 16 16"><path d="M3.5 0.5H11.5L14.5 3.5V15.5H3.5Z" fill="#fff" stroke="#919191" stroke-linejoin="round"/><path d="M11.5 0.8V3.5H14.2" fill="none" stroke="#919191" stroke-width=".8"/><circle cx="9.2" cy="8.8" r="3.8" fill="#d6d6d6" stroke="#a6a6a6" stroke-width=".8"/><circle cx="9.2" cy="8.8" r="1.2" fill="#f6f6f6" stroke="#b0b0b0" stroke-width=".5"/></svg>
<div class="t" style="top:471px;left:511px;letter-spacing:-0.748px;">FreeBSD-13.0-RELEAS...</div>
<div class="t" style="top:471px;left:650px;letter-spacing:-0.564px;">4,671,89...</div>
<div class="t" style="top:471px;left:715px;letter-spacing:-0.230px;">5/13/2022 7:16:58 AM</div>
<div class="t" style="top:471px;left:944px;width:7px;overflow:hidden">R</div>
<svg style="left:492px;top:489px;" width="16" height="16" viewBox="0 0 16 16"><path d="M3.5 0.5H11.5L14.5 3.5V15.5H3.5Z" fill="#fff" stroke="#919191" stroke-linejoin="round"/><path d="M11.5 0.8V3.5H14.2" fill="none" stroke="#919191" stroke-width=".8"/><circle cx="9.2" cy="8.8" r="3.8" fill="#d6d6d6" stroke="#a6a6a6" stroke-width=".8"/><circle cx="9.2" cy="8.8" r="1.2" fill="#f6f6f6" stroke="#b0b0b0" stroke-width=".5"/></svg>
<div class="t" style="top:490px;left:511px;letter-spacing:-0.315px;">freebsd131.iso</div>
<div class="t" style="top:490px;left:650px;letter-spacing:-0.564px;">4,512,97...</div>
<div class="t" style="top:490px;left:715px;letter-spacing:-0.230px;">6/28/2022 2:17:46 AM</div>
<div class="t" style="top:490px;left:944px;width:7px;overflow:hidden">R</div>
<svg style="left:492px;top:508px;" width="16" height="16" viewBox="0 0 16 16"><path d="M3.5 0.5H11.5L14.5 3.5V15.5H3.5Z" fill="#fff" stroke="#919191" stroke-linejoin="round"/><path d="M11.5 0.8V3.5H14.2" fill="none" stroke="#919191" stroke-width=".8"/></svg>
<div class="t" style="top:509px;left:511px;letter-spacing:0.012px;">fri-10gb.bin.1</div>
<div class="t" style="top:509px;left:651px;letter-spacing:-0.655px;">10,240,0...</div>
<div class="t" style="top:509px;left:715px;letter-spacing:-0.230px;">6/29/2022 2:51:56 AM</div>
<div class="t" style="top:509px;left:944px;width:7px;overflow:hidden">R</div>
<svg style="left:492px;top:527px;" width="16" height="16" viewBox="0 0 16 16"><path d="M3.5 0.5H11.5L14.5 3.5V15.5H3.5Z" fill="#fff" stroke="#919191" stroke-linejoin="round"/><path d="M11.5 0.8V3.5H14.2" fill="none" stroke="#919191" stroke-width=".8"/></svg>
<div class="t" style="top:528px;left:511px;letter-spacing:0.069px;">fri-10gb.bin.2</div>
<div class="t" style="top:528px;left:651px;letter-spacing:-0.655px;">10,240,0...</div>
<div class="t" style="top:528px;left:715px;letter-spacing:-0.230px;">6/29/2022 2:59:00 AM</div>
<div class="t" style="top:528px;left:944px;width:7px;overflow:hidden">R</div>
<svg style="left:492px;top:546px;" width="16" height="16" viewBox="0 0 16 16"><path d="M3.5 0.5H11.5L14.5 3.5V15.5H3.5Z" fill="#fff" stroke="#b4b4b4" stroke-linejoin="round"/><path d="M11.5 0.8V3.5H14.2" fill="none" stroke="#b4b4b4" stroke-width=".8"/><rect x="5.3" y="4" width="8.5" height="9" fill="#44546c"/><rect x="7.3" y="4.6" width="4.5" height="3.6" fill="#52bdea"/><rect x="7.3" y="6.4" width="4.5" height=".9" fill="#d86a8a"/><rect x="7.3" y="8.9" width="4.5" height="3.6" fill="#2b8be2"/><rect x="5.8" y="4.70" width="1" height="1" fill="#fff"/><rect x="5.8" y="6.45" width="1" height="1" fill="#fff"/><rect x="5.8" y="8.20" width="1" height="1" fill="#fff"/><rect x="5.8" y="9.95" width="1" height="1" fill="#fff"/><rect x="5.8" y="11.70" width="1" height="1" fill="#fff"/><rect x="12.3" y="4.70" width="1" height="1" fill="#fff"/><rect x="12.3" y="6.45" width="1" height="1" fill="#fff"/><rect x="12.3" y="8.20" width="1" height="1" fill="#fff"/><rect x="12.3" y="9.95" width="1" height="1" fill="#fff"/><rect x="12.3" y="11.70" width="1" height="1" fill="#fff"/></svg>
<div class="t" style="top:547px;left:511px;letter-spacing:-0.266px;">Le Corniaud (1965) Fr...</div>
<div class="t" style="top:547px;left:645.2px;letter-spacing:-0.742px;">830,101 KB</div>
<div class="t" style="top:547px;left:715px;letter-spacing:-0.230px;">10/6/2021 2:57:35 AM</div>
<div class="t" style="top:547px;left:944px;width:7px;overflow:hidden">ro</div>
<svg style="left:492px;top:565px;" width="16" height="16" viewBox="0 0 16 16"><path d="M3.5 0.5H11.5L14.5 3.5V15.5H3.5Z" fill="#fff" stroke="#919191" stroke-linejoin="round"/><path d="M11.5 0.8V3.5H14.2" fill="none" stroke="#919191" stroke-width=".8"/></svg>
<div class="t" style="top:566px;left:511px;letter-spacing:-0.015px;">spm-10gb.bin.1</div>
<div class="t" style="top:566px;left:651px;letter-spacing:-0.655px;">10,240,0...</div>
<div class="t" style="top:566px;left:715px;letter-spacing:-0.230px;">6/29/2022 2:58:55 AM</div>
<div class="t" style="top:566px;left:944px;width:7px;overflow:hidden">R</div>
<div class="a" style="left:492px;top:583px;width:16px;height:3px;overflow:hidden"><svg style="left:0px;top:1px;" width="16" height="16" viewBox="0 0 16 16"><path d="M3.5 0.5H11.5L14.5 3.5V15.5H3.5Z" fill="#fff" stroke="#919191" stroke-linejoin="round"/><path d="M11.5 0.8V3.5H14.2" fill="none" stroke="#919191" stroke-width=".8"/></svg></div>
<div class="a" style="left:951px;top:178px;width:16px;height:408px;background:#f0f0f0;"></div>
<div class="a" style="left:951px;top:196px;width:15px;height:213px;background:#cdcdcd;"></div>
<svg style="left:954px;top:183px" width="9" height="8"><path d="M1.2 5.8L4.5 2L7.8 5.8" stroke="#505050" stroke-width="2.1" fill="none"/></svg>
<svg style="left:954px;top:573px" width="9" height="8"><path d="M1.2 2L4.5 5.8L7.8 2" stroke="#505050" stroke-width="2.1" fill="none"/></svg>
<div class="a" style="left:489px;top:586px;width:462px;height:16px;background:#f0f0f0;"></div>
<div class="a" style="left:506px;top:586px;width:386px;height:16px;background:#cdcdcd;"></div>
<div class="a" style="left:951px;top:586px;width:16px;height:16px;background:#f0f0f0;"></div>
<svg style="left:493px;top:589px" width="8" height="9"><path d="M6 1.3L2 4.5L6 7.7" stroke="#505050" stroke-width="2.1" fill="none"/></svg>
<svg style="left:937px;top:589px" width="8" height="9"><path d="M2 1.3L6 4.5L2 7.7" stroke="#505050" stroke-width="2.1" fill="none"/></svg>
<div class="t" style="top:608px;left:4.5px;letter-spacing:-0.384px;">9.76 GB of 14.0 GB in 1 of 8</div>
<div class="t" style="top:608px;left:433.5px;letter-spacing:-0.067px;">8 hidden</div>
<div class="t" style="top:608px;left:490px;letter-spacing:-0.337px;">0 B of 172 GB in 0 of 34</div>
<div class="a" style="left:1px;top:627px;width:968px;height:1px;background:#e0e0e0;"></div>
<div class="a" style="left:746px;top:628px;width:1px;height:10px;background:#e0e0e0;"></div>
<div class="a" style="left:749px;top:628px;width:1px;height:10px;background:#e0e0e0;"></div>
<div class="a" style="left:781px;top:628px;width:1px;height:10px;background:#e0e0e0;"></div>
<div class="a" style="left:784px;top:628px;width:1px;height:10px;background:#e0e0e0;"></div>
<div class="a" style="left:851px;top:628px;width:1px;height:10px;background:#e0e0e0;"></div>
<div class="a" style="left:854px;top:628px;width:1px;height:10px;background:#e0e0e0;"></div>
<div class="a" style="left:886px;top:628px;width:1px;height:10px;background:#e0e0e0;"></div>
<div class="a" style="left:889px;top:628px;width:1px;height:10px;background:#e0e0e0;"></div>
<div class="t" style="top:628px;left:812.5px;letter-spacing:-1.589px;">S3</div>
<div class="t" style="top:628px;left:910px;letter-spacing:-0.505px;">0:03:55</div>
<svg style="left:757px;top:628px;" width="16" height="16" viewBox="0 0 16 16"><path d="M3.6 8.5V6Q3.6 2 7.6 2Q11.6 2 11.6 6V8.5" fill="none" stroke="#c4901a" stroke-width="1.8"/><rect x="1.5" y="8" width="12.2" height="8" rx="1" fill="#f7cf3e" stroke="#b9860e"/><rect x="2" y="8.5" width="11.2" height="1.4" fill="#fbe58a"/></svg>
<svg style="left:861px;top:629px;" width="16" height="16" viewBox="0 0 16 16"><path d="M4.5 0.5H12.5L14.5 2.5V12H4.5Z" fill="#e6e6e6" stroke="#a8a8a8"/><path d="M1.5 2.5H9.5L11.5 4.5V14H1.5Z" fill="#ededed" stroke="#a0a0a0"/><path d="M3.5 6H9.5M3.5 8H9.5" stroke="#b0b0b0" stroke-width=".9"/></svg>
<div class="t" style="top:578px;left:701.5px;letter-spacing:0.903px;font-size:18px;color:rgba(110,110,110,.5);line-height:24px;height:24px">Activate Windows</div>
<div class="t" style="top:603px;left:701.5px;letter-spacing:0.189px;font-size:14.5px;color:rgba(110,110,110,.5);line-height:18px;height:18px">Go to Settings to activate Windows.</div>
<div class="a" style="left:304px;top:221px;width:362px;height:208px;background:#fff;border:1px solid #6b6b6b"></div>
<div class="t" style="top:226px;left:308.5px;letter-spacing:-0.101px;">1% Uploading</div>
<div class="t" style="top:225px;left:593.6px;font-size:14.5px;transform:scaleX(.8);transform-origin:0 0;-webkit-text-stroke:.35px #000;line-height:18px;height:18px">?</div>
<svg style="left:637px;top:229px" width="11" height="11"><path d="M0.5 0.5L10.5 10.5M10.5 0.5L0.5 10.5" stroke="#000" stroke-width="1.1" fill="none"/></svg>
<svg style="left:314px;top:258px;" width="32" height="32" viewBox="0 0 32 32"><path d="M1.5 10.5H18.5L18.0 10V31.5H1.5Z" fill="url(#gd)" stroke="#5f86b8"/><path d="M4 14.5H15.5" stroke="#5d8ac6" stroke-width=".9"/><path d="M4 16.5H15.5" stroke="#5d8ac6" stroke-width=".9"/><path d="M4 18.5H15.5" stroke="#5d8ac6" stroke-width=".9"/><path d="M4 20.5H15.5" stroke="#5d8ac6" stroke-width=".9"/><path d="M4 22.5H15.5" stroke="#5d8ac6" stroke-width=".9"/><path d="M4 24.5H15.5" stroke="#5d8ac6" stroke-width=".9"/><path d="M4 26.5H15.5" stroke="#5d8ac6" stroke-width=".9"/><path d="M4 28.5H15.5" stroke="#5d8ac6" stroke-width=".9"/><path d="M11.5 0.5H24.5L28.5 4.5V21.5H11.5Z" fill="url(#gd)" stroke="#5f86b8"/><path d="M24.5 0.5V4.5H28.5" fill="#e6eef8" stroke="#a8bedb" stroke-width=".6"/><path d="M14 4.5H22.5" stroke="#5d8ac6" stroke-width=".9"/><path d="M14 6.5H26" stroke="#5d8ac6" stroke-width=".9"/><path d="M14 8.5H26" stroke="#5d8ac6" stroke-width=".9"/><path d="M14 10.5H26" stroke="#5d8ac6" stroke-width=".9"/><path d="M14 12.5H26" stroke="#5d8ac6" stroke-width=".9"/><path d="M14 14.5H26" stroke="#5d8ac6" stroke-width=".9"/><path d="M14 16.5H26" stroke="#5d8ac6" stroke-width=".9"/><path d="M14 18.5H26" stroke="#5d8ac6" stroke-width=".9"/><path d="M16.4 14.4H29.8V27.8L26 24L18.3 31.5L13.2 26L20.5 19Z" fill="#4a90ea" stroke="#1f58b0" stroke-width=".9" stroke-linejoin="round"/></svg>
<div class="t dlg" style="top:260px;left:355px;letter-spacing:-0.456px;font-size:11px;">File:</div>
<div class="t dlg" style="top:260px;left:411px;letter-spacing:-0.220px;font-size:11px;">C:\10GB.bin</div>
<div class="t dlg" style="top:276px;left:355px;letter-spacing:0.125px;font-size:11px;">Target:</div>
<div class="t dlg" style="top:276px;left:411px;letter-spacing:0.110px;font-size:11px;">/tmp/</div>
<div class="a" style="left:355px;top:297px;width:302px;height:14px;background:#e6e6e6;border:1px solid #bcbcbc"></div>
<div class="a" style="left:355px;top:297px;width:3px;height:14px;background:#06b025;"></div>
<div class="t dlg" style="top:323px;left:355px;letter-spacing:-0.082px;font-size:11px;">Time left:</div>
<div class="t dlg" style="top:323px;left:470px;letter-spacing:0.186px;font-size:11px;">0:21:34</div>
<div class="t dlg" style="top:323px;left:520px;letter-spacing:-0.283px;font-size:11px;">Time elapsed:</div>
<div class="t dlg" style="top:323px;left:619px;letter-spacing:0.115px;font-size:11px;">0:00:19</div>
<div class="t dlg" style="top:339px;left:355px;letter-spacing:0.038px;font-size:11px;">Bytes transferred:</div>
<div class="t dlg" style="top:339px;left:474px;letter-spacing:-0.735px;font-size:11px;">135 MB</div>
<div class="t dlg" style="top:339px;left:520px;letter-spacing:-0.310px;font-size:11px;">Speed:</div>
<div class="t dlg" style="top:339px;left:609.5px;letter-spacing:-0.280px;font-size:11px;">7.62 MB/s</div>
<div class="a" style="left:355px;top:360px;width:302px;height:14px;background:#e6e6e6;border:1px solid #bcbcbc"></div>
<div class="a" style="left:355px;top:360px;width:3px;height:14px;background:#06b025;"></div>
<div class="a" style="left:357px;top:391px;width:23px;height:22px;background:#cce4f7;border:1px solid #4a98dc"></div>
<svg style="left:359px;top:394px;transform:scale(.94);transform-origin:0 0;" width="16" height="16" viewBox="0 0 16 16"><path d="M1.2 3.6L3.6 1.2L8 5.6L12.4 1.2L14.8 3.6L10.4 8L14.8 12.4L12.4 14.8L8 10.4L3.6 14.8L1.2 12.4L5.6 8Z" fill="#e0201c" stroke="#a80f0c" stroke-width=".8" stroke-linejoin="round"/></svg>
<svg style="left:383px;top:395px;" width="16" height="16" viewBox="0 0 16 16"><path d="M0.5 0.5H7.2L10.0 3.3V12.0H0.5Z" fill="url(#gd)" stroke="#4a74a8" stroke-width="1.1" stroke-linejoin="round"/><path d="M7.2 0.8V3.3H9.7" fill="none" stroke="#4a74a8" stroke-width=".7" opacity=".7"/><path d="M2.2 3.4H5.5" stroke="#4a74a8" stroke-width="1"/><path d="M2.2 5.4H8.3" stroke="#4a74a8" stroke-width="1"/><path d="M2.2 7.4H8.3" stroke="#4a74a8" stroke-width="1"/><path d="M2.2 9.4H8.3" stroke="#4a74a8" stroke-width="1"/><path d="M5.6 5.6L12.6 10.4L5.6 15.2Z" fill="#35b535" stroke="#1d8a22" stroke-width=".7"/><rect x="13.4" y="5.6" width="2.2" height="9.8" fill="#35b535" stroke="#1d8a22" stroke-width=".5"/></svg>
<div class="a" style="left:410px;top:405px;width:8px;height:3px;background:#111;"></div>
<svg style="left:429px;top:394px;" width="16" height="16" viewBox="0 0 16 16"><path d="M6.5 0.5H12.7L15.5 3.3V10.5H6.5Z" fill="url(#gd)" stroke="#4a74a8" stroke-width="1.1" stroke-linejoin="round"/><path d="M12.7 0.8V3.3H15.2" fill="none" stroke="#4a74a8" stroke-width=".7" opacity=".7"/><path d="M3.5 2.3H9.7L12.5 5.1V12.8H3.5Z" fill="url(#gd)" stroke="#4a74a8" stroke-width="1.1" stroke-linejoin="round"/><path d="M9.7 2.6V5.1H12.2" fill="none" stroke="#4a74a8" stroke-width=".7" opacity=".7"/><path d="M0.5 4.1H6.7L9.5 6.8999999999999995V15.299999999999999H0.5Z" fill="url(#gd)" stroke="#4a74a8" stroke-width="1.1" stroke-linejoin="round"/><path d="M6.7 4.4V6.8999999999999995H9.2" fill="none" stroke="#4a74a8" stroke-width=".7" opacity=".7"/><path d="M2.2 7.0H5" stroke="#4a74a8" stroke-width="1"/><path d="M2.2 9.0H7.8" stroke="#4a74a8" stroke-width="1"/><path d="M2.2 11.0H7.8" stroke="#4a74a8" stroke-width="1"/><path d="M2.2 13.0H7.8" stroke="#4a74a8" stroke-width="1"/><path d="M16 6.4V13L13.8 10.9L9.6 15.6L7.4 13.4L11.8 9L9.6 6.6Z" fill="#46b43c" stroke="#1f8a24" stroke-width=".7"/></svg>
<svg style="left:452px;top:394px;" width="16" height="16" viewBox="0 0 16 16"><circle cx="5.7" cy="5.4" r="5.4" fill="#2d6fdc" stroke="#1b4fb0" stroke-width=".6"/><path d="M3 5.4L5.2 7.8L8.6 2.8" stroke="#fff" stroke-width="1.7" fill="none"/><circle cx="12" cy="11.2" r="4.2" fill="#4cc43e" stroke="#2a9a2a" stroke-width=".8"/></svg>
<svg style="left:475px;top:401px" width="5" height="3"><path d="M0 0H5V1H4V2H3V3H2V2H1V1H0Z" fill="#000"/></svg>
<svg style="left:487px;top:395px;" width="16" height="16" viewBox="0 0 16 16"><circle cx="7.6" cy="7.6" r="7.2" fill="#fdfdfd" stroke="#3a3a3a" stroke-width="1.1"/><path d="M2.6 9.4A5.2 5.2 0 0 1 5 3.2" stroke="#f7d23a" stroke-width="2" fill="none"/><path d="M5 3.2A5.2 5.2 0 0 1 10.6 3.4" stroke="#f39a28" stroke-width="2" fill="none"/><path d="M10.6 3.4A5.2 5.2 0 0 1 12.6 9.4" stroke="#e0382c" stroke-width="2" fill="none"/><path d="M7.8 8.2L4.6 4.8" stroke="#222" stroke-width="1.4" stroke-linecap="round"/><circle cx="7.8" cy="8.2" r="1.2" fill="#222"/></svg>
<div class="t" style="top:394px;left:505.5px;letter-spacing:0.110px;">Unlimited</div>
<svg style="left:584px;top:401px" width="5" height="3"><path d="M0 0H5V1H4V2H3V3H2V2H1V1H0Z" fill="#000"/></svg>
<div class="a" style="left:365px;top:419px;width:82px;height:27px;background:#fff;border:1px solid #767676"></div>
<div class="t" style="top:425px;left:371px;letter-spacing:-0.669px;font-weight:bold;">Cancel (Esc)</div>
</body></html>
